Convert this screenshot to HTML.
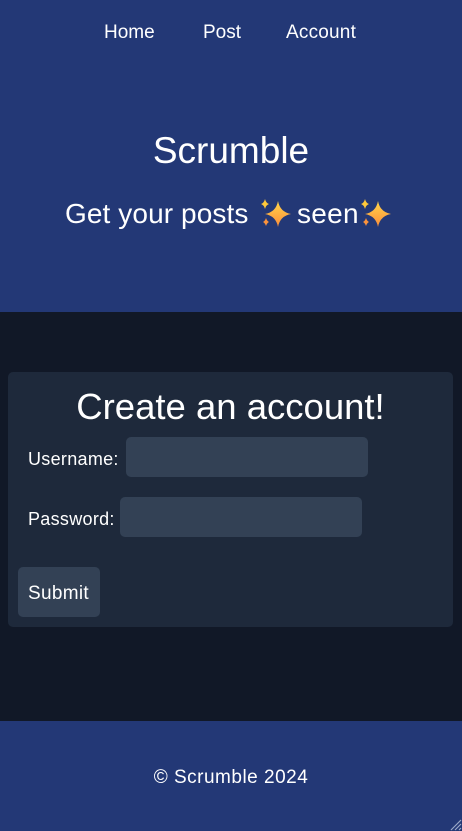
<!DOCTYPE html>
<html><head><meta charset="utf-8"><style>
*{margin:0;padding:0;box-sizing:border-box}
html,body{width:462px;height:831px;overflow:hidden;background:#111827;font-family:"Liberation Sans",sans-serif;color:#fff}
.abs{position:absolute}
header{position:absolute;left:0;top:0;width:462px;height:312px;background:#233876}
footer{position:absolute;left:0;top:721px;width:462px;height:110px;background:#233876}
.nav{font-size:19px;top:22px}
.card{left:8px;top:372px;width:445px;height:255px;background:#1e293b;border-radius:5px}
.inp{background:#334155;border-radius:5px;height:40px;width:242px}
.lbl{font-size:18px;letter-spacing:0.3px}
</style></head><body>
<header>
<div class="abs nav" style="left:104px">Home</div>
<div class="abs nav" style="left:203px">Post</div>
<div class="abs nav" style="left:286px;letter-spacing:0.2px">Account</div>
<div class="abs" style="left:0;width:462px;text-align:center;top:130px;font-size:37px">Scrumble</div>
<div class="abs" style="left:65px;top:198px;font-size:28px;letter-spacing:0.1px;white-space:nowrap">Get your posts</div>
<svg class="abs" style="left:259px;top:197px" width="34" height="32" viewBox="0 0 34 32">
<defs><linearGradient id="g" x1="0" y1="0" x2="0" y2="1"><stop offset="0" stop-color="#ffd54a"/><stop offset="1" stop-color="#fb8c3a"/></linearGradient></defs>
<path d="M19 4 Q21 15 32 17 Q21 19 19 30 Q17 19 6 17 Q17 15 19 4Z" fill="url(#g)"/>
<path d="M6 2 Q7 6 10 7 Q7 8 6 12 Q5 8 2 7 Q5 6 6 2Z" fill="#ffc93a"/>
<path d="M7 21 Q8 24 10 25 Q8 26 7 29 Q6 26 4 25 Q6 24 7 21Z" fill="#fb923c"/>
</svg>
<div class="abs" style="left:297px;top:198px;font-size:28px;letter-spacing:0.3px">seen</div>
<svg class="abs" style="left:359px;top:197px" width="34" height="32" viewBox="0 0 34 32">
<path d="M19 4 Q21 15 32 17 Q21 19 19 30 Q17 19 6 17 Q17 15 19 4Z" fill="url(#g)"/>
<path d="M6 2 Q7 6 10 7 Q7 8 6 12 Q5 8 2 7 Q5 6 6 2Z" fill="#ffc93a"/>
<path d="M7 21 Q8 24 10 25 Q8 26 7 29 Q6 26 4 25 Q6 24 7 21Z" fill="#fb923c"/>
</svg>
</header>
<div class="abs card"></div>
<div class="abs" style="left:8px;width:445px;text-align:center;top:386px;font-size:36.5px">Create an account!</div>
<div class="abs lbl" style="left:28px;top:449px">Username:</div>
<div class="abs inp" style="left:126px;top:437px"></div>
<div class="abs lbl" style="left:28px;top:509px">Password:</div>
<div class="abs inp" style="left:120px;top:497px"></div>
<div class="abs" style="left:18px;top:567px;width:82px;height:50px;background:#334155;border-radius:5px"></div>
<div class="abs lbl" style="left:28px;top:583px;font-size:19px">Submit</div>
<footer><div class="abs" style="left:0;width:462px;text-align:center;top:46px;font-size:19px;letter-spacing:0.5px">© Scrumble 2024</div>
<svg class="abs" style="left:448px;top:96px" width="14" height="14"><path d="M13 3 L3 13 M13 7 L7 13 M13 11 L11 13" stroke="#9aa7c7" stroke-width="1.2"/></svg>
</footer>
</body></html>
